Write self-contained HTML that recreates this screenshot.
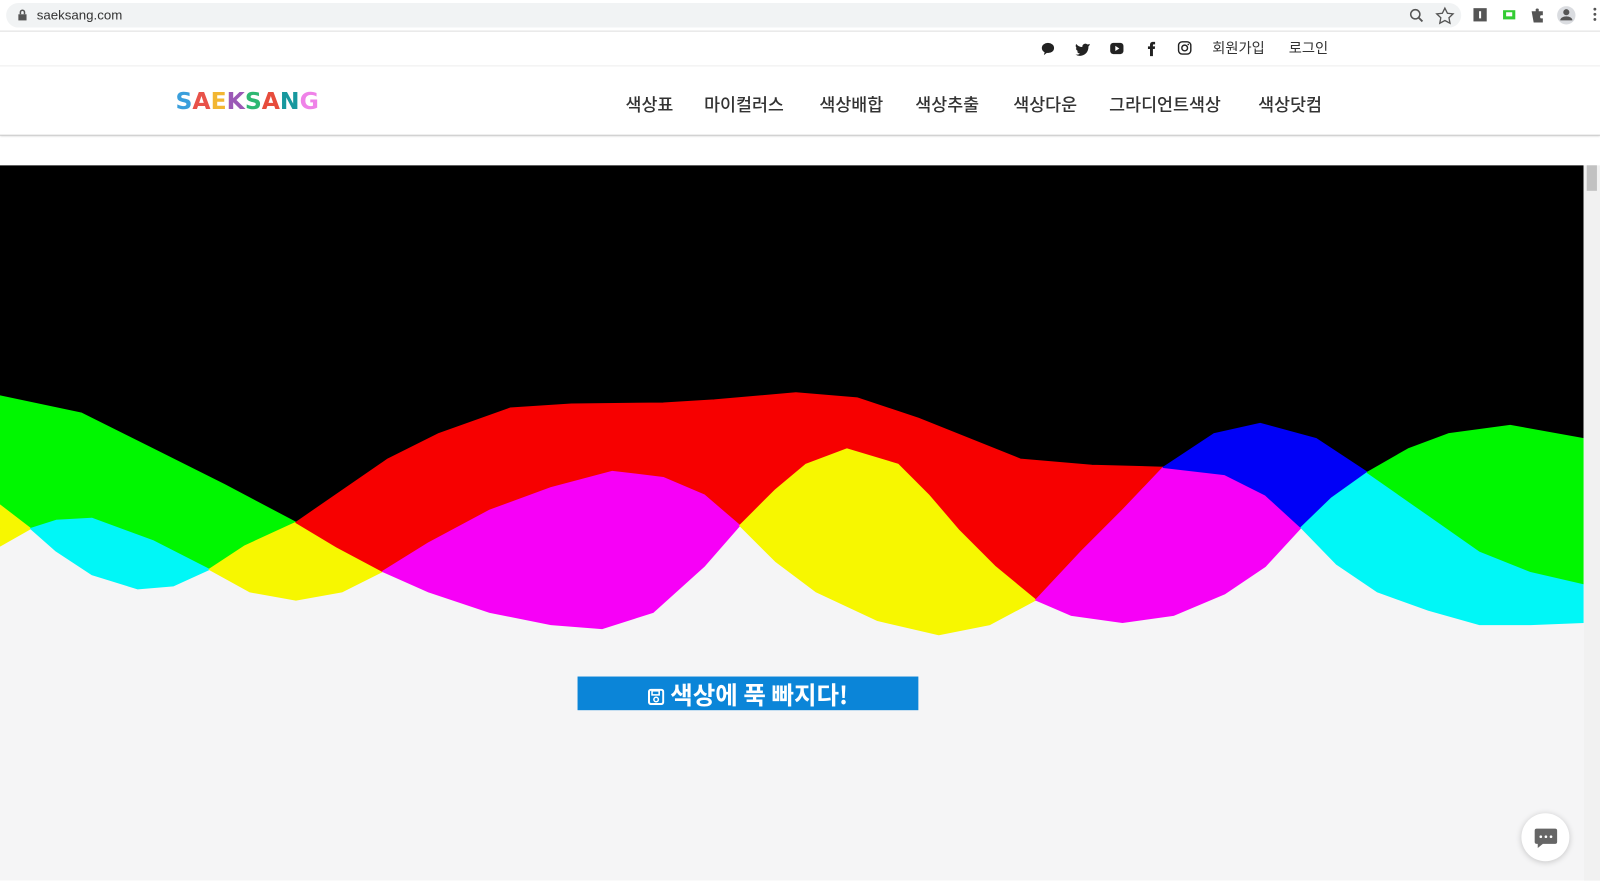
<!DOCTYPE html>
<html><head><meta charset="utf-8"><style>
*{margin:0;padding:0;box-sizing:border-box}
body{width:1600px;height:880px;overflow:hidden;background:#fff;font-family:"Liberation Sans","Noto Sans CJK KR",sans-serif;position:relative}
#w{position:absolute;left:0;top:0;width:1568px;height:863px;transform:scale(1.0204);transform-origin:0 0}
.abs{position:absolute}
.chrome{left:0;top:0;width:1568px;height:31px;background:#fff;border-bottom:1px solid #ddd}
.pill{left:6px;top:3px;width:1426px;height:24px;background:#f1f3f4;border-radius:12px}
.url{left:36px;top:7px;font-size:13px;color:#333}
.topbar{left:0;top:31px;width:1568px;height:34px;border-bottom:1px solid #f0f0f0}
.nav{left:0;top:65px;width:1568px;height:68px;border-bottom:1px solid #ccc;box-shadow:0 1px 2px rgba(0,0,0,.2)}
.ni{top:89px;font-size:17px;color:#333;font-weight:500;font-family:"Noto Sans CJK KR",sans-serif}
.ti{top:37px;font-size:14px;color:#333;font-family:"Noto Sans CJK KR",sans-serif}
.logo{left:172px;top:87px;font-size:23px;font-weight:bold;font-family:"DejaVu Sans",sans-serif}
svg path.s{stroke-width:1.2}
</style></head><body><div id="w">
<div class="abs chrome"></div>
<div class="abs pill"></div>
<svg class="abs" style="left:17px;top:9px" width="10" height="12"><rect x="1" y="5" width="8" height="6" fill="#555"/><path d="M3 5V3a2 2 0 0 1 4 0v2" stroke="#555" fill="none" stroke-width="1.5"/></svg>
<div class="abs url">saeksang.com</div>
<svg class="abs" style="left:1380px;top:6px" width="200" height="20">
<circle cx="7" cy="8" r="4.5" stroke="#555" fill="none" stroke-width="1.5"/><line x1="10" y1="11" x2="14" y2="15" stroke="#555" stroke-width="1.8"/>
<path d="M36 2l2.5 5 5.5.6-4 3.8 1 5.4-5-2.7-5 2.7 1-5.4-4-3.8 5.5-.6z" fill="none" stroke="#555" stroke-width="1.3"/>
<rect x="64" y="2" width="13" height="13" fill="#555"/><rect x="69.5" y="5" width="2" height="7" fill="#fff"/>
<rect x="93" y="4" width="12" height="9" fill="#3c3"/><rect x="96" y="6" width="6" height="4" fill="#fff"/>
<path d="M121 5h4v-2a2 2 0 0 1 3 0v2h4v4h-2a2 2 0 0 0 0 3h2v4h-9z" fill="#555"/>
<circle cx="155" cy="9" r="9" fill="#dadce0"/><circle cx="155" cy="6" r="3" fill="#555"/><path d="M149 14a6 4 0 0 1 12 0z" fill="#555"/>
<circle cx="183" cy="3" r="1.4" fill="#555"/><circle cx="183" cy="8" r="1.4" fill="#555"/><circle cx="183" cy="13" r="1.4" fill="#555"/>
</svg>
<div class="abs topbar"></div>
<svg class="abs" style="left:1020px;top:40px" width="150" height="16">
<ellipse cx="7" cy="7" rx="6" ry="5" fill="#222"/><path d="M4 10l-1 4 4-3z" fill="#222"/>
<g transform="translate(13,0)"><path d="M35 3c-1 .5-1.6.5-2.3.6a3 3 0 0 0-5 2.5 8 8 0 0 1-6-3c-1 1.6-.4 3.6 1 4.4-.5 0-1-.2-1.3-.4 0 1.5 1 2.8 2.5 3.1-.5.2-1 .2-1.4.1.4 1.3 1.6 2.1 2.9 2.2A6 6 0 0 1 21 13.5c5.8 3.3 13-.3 12.7-8.1.7-.5 1.2-1 1.3-2.4z" fill="#222"/></g>
<rect x="68" y="2" width="13" height="11" rx="3" fill="#222"/><path d="M73 5l4 2.5-4 2.5z" fill="#fff"/>
<path d="M107 15V8h-2V5.5h2V4c0-2 1-3 3-3h2v2.5h-1.3c-.6 0-.8.3-.8.9v1.1h2.1l-.3 2.5h-1.8v7z" fill="#222"/>
<rect x="135" y="1" width="12" height="12" rx="3.5" fill="none" stroke="#222" stroke-width="1.4"/><circle cx="141" cy="7" r="2.8" fill="none" stroke="#222" stroke-width="1.4"/><circle cx="144.5" cy="3.6" r=".8" fill="#222"/>
</svg>
<div class="abs ti" style="left:1188px">회원가입</div>
<div class="abs ti" style="left:1263px">로그인</div>
<div class="abs nav"></div>
<div class="abs logo"><span style="color:#3a9fdc">S</span><span style="color:#e8524a">A</span><span style="color:#f2b632">E</span><span style="color:#9b59b6">K</span><span style="color:#2eb872">S</span><span style="color:#e74c3c">A</span><span style="color:#17989e">N</span><span style="color:#ef82e8">G</span></div>
<div class="abs ni" style="left:613px">색상표</div>
<div class="abs ni" style="left:690px">마이컬러스</div>
<div class="abs ni" style="left:803px">색상배합</div>
<div class="abs ni" style="left:897px">색상추출</div>
<div class="abs ni" style="left:993px">색상다운</div>
<div class="abs ni" style="left:1087px">그라디언트색상</div>
<div class="abs ni" style="left:1233px">색상닷컴</div>

<svg class="abs" style="left:0;top:162px" width="1552" height="701" viewBox="0 162 1552 701">
<rect x="0" y="162" width="1552" height="701" fill="#f5f5f6"/>
<g stroke-linejoin="round">
<path d="M0 162H1552V430L1480 417 1420 425 1380 440 1340 463 1290 430 1235 415 1190 425 1140 458 1070 456 1000 450 900 410 840 390 780 385 700 392 650 395 560 396 500 400 430 425 380 450 290 512 220 475 150 440 80 405 0 388Z" fill="#000"/>
<path class="s" d="M0 388 80 405 150 440 220 475 290 512 240 535 205 558 150 530 90 508 55 510 30 518 0 495Z" fill="#00f700" stroke="#00f700"/>
<path class="s" d="M0 495 30 518 0 535Z" fill="#f7f700" stroke="#f7f700"/>
<path class="s" d="M30 518 55 510 90 508 150 530 205 558 170 574 135 577 90 563 55 540Z" fill="#00f7f7" stroke="#00f7f7"/>
<path class="s" d="M205 558 240 535 290 512 330 536 375 560 335 580 290 588 245 580Z" fill="#f7f700" stroke="#f7f700"/>
<path class="s" d="M290 512 380 450 430 425 500 400 560 396 650 395 700 392 780 385 840 390 900 410 1000 450 1070 456 1140 458 1100 500 1060 540 1015 588 975 555 940 520 910 485 880 455 830 440 790 455 760 480 725 515 690 485 650 468 600 462 540 478 480 500 420 532 375 560 330 536Z" fill="#f70000" stroke="#f70000"/>
<path class="s" d="M375 560 420 532 480 500 540 478 600 462 650 468 690 485 725 515 690 555 640 600 590 616 540 612 480 600 420 580Z" fill="#f700f7" stroke="#f700f7"/>
<path class="s" d="M725 515 760 480 790 455 830 440 880 455 910 485 940 520 975 555 1015 588 970 612 920 622 860 608 800 580 760 550Z" fill="#f7f700" stroke="#f7f700"/>
<path class="s" d="M1015 588 1060 540 1100 500 1140 458 1200 465 1240 485 1275 517 1240 555 1200 582 1150 603 1100 610 1050 603Z" fill="#f700f7" stroke="#f700f7"/>
<path class="s" d="M1140 458 1190 425 1235 415 1290 430 1340 463 1305 488 1275 517 1240 485 1200 465Z" fill="#0000f7" stroke="#0000f7"/>
<path class="s" d="M1275 517 1305 488 1340 463 1400 505 1450 540 1500 560 1552 572V610L1500 612 1450 612 1400 598 1350 580 1310 553Z" fill="#00f7f7" stroke="#00f7f7"/>
<path class="s" d="M1340 463 1380 440 1420 425 1480 417 1552 430V572L1500 560 1450 540 1400 505Z" fill="#00f700" stroke="#00f700"/>
</g>
</svg>
<div class="abs" style="left:1552px;top:162px;width:16px;height:701px;background:#f1f1f1"></div>
<div class="abs" style="left:1555px;top:162px;width:10px;height:25px;background:#c1c1c1"></div>
<div class="abs" style="left:566px;top:663px;width:334px;height:33px;background:#0b85d8;color:#fff;font-size:24px;font-weight:bold;text-align:center;line-height:33px;font-family:'Noto Sans CJK KR',sans-serif">
<svg width="16" height="16" style="vertical-align:-1px;margin-right:6px"><rect x="1" y="1" width="14" height="14" rx="2" fill="none" stroke="#fff" stroke-width="2"/><rect x="4" y="2" width="7" height="4" fill="none" stroke="#fff" stroke-width="1.5"/><circle cx="8" cy="10.5" r="2.2" fill="none" stroke="#fff" stroke-width="1.5"/></svg>색상에 푹 빠지다!</div>
<div class="abs" style="left:1491px;top:797px;width:47px;height:47px;border-radius:50%;background:#fff;box-shadow:0 1px 6px rgba(0,0,0,.2)"></div>
<svg class="abs" style="left:1503px;top:810px" width="24" height="22"><path d="M3 2h18a2 2 0 0 1 2 2v11a2 2 0 0 1-2 2H9l-5 4v-4H3a2 2 0 0 1-2-2V4a2 2 0 0 1 2-2z" fill="#666"/><circle cx="7" cy="10" r="1.3" fill="#fff"/><circle cx="12" cy="10" r="1.3" fill="#fff"/><circle cx="17" cy="10" r="1.3" fill="#fff"/></svg>
</div></body></html>
